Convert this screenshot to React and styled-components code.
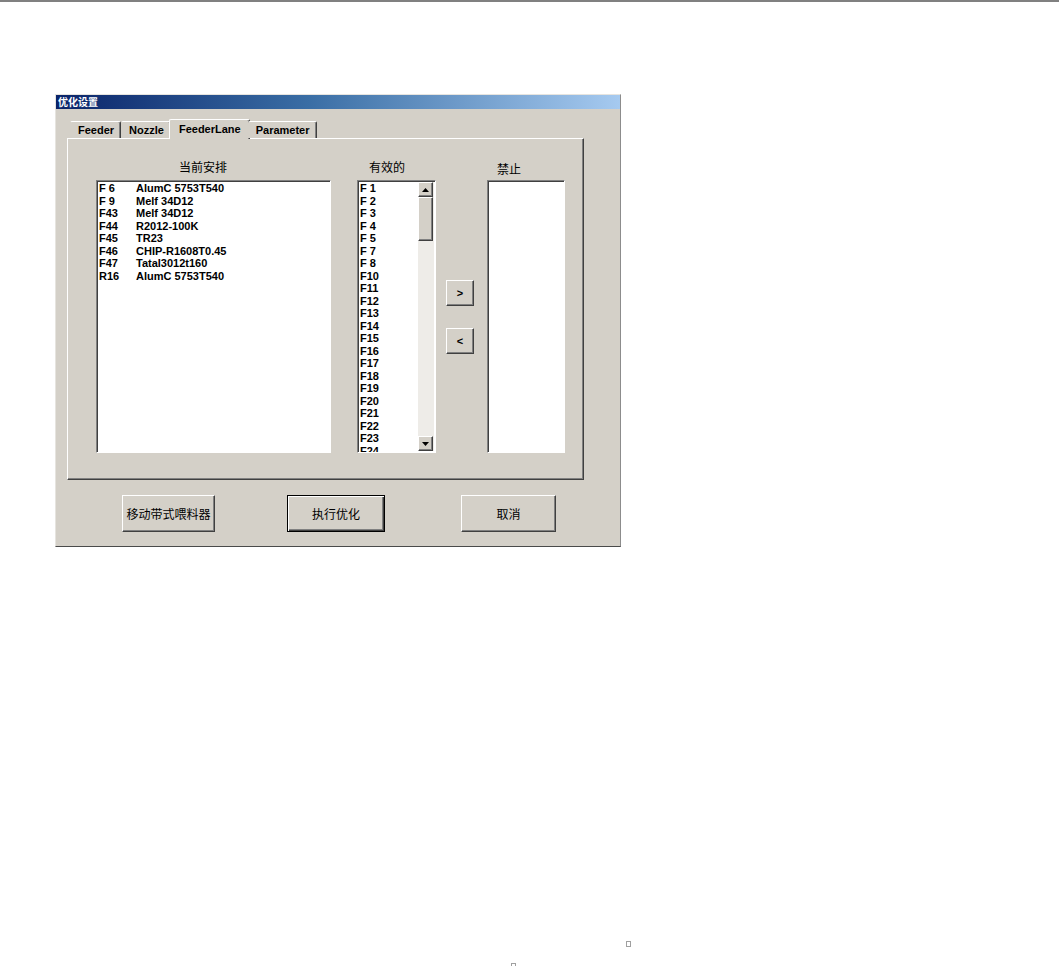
import React from 'react';
import styled, { createGlobalStyle, css } from 'styled-components';

const GlobalStyle = createGlobalStyle`
  html, body { margin: 0; padding: 0; background: #ffffff; }
  body { font-family: "Liberation Sans", Arial, "Noto Sans CJK SC", sans-serif; }
  * { box-sizing: border-box; }
`;

const FACE = '#d4d0c8';

const raised = css`
  border: 1px solid;
  border-color: #ffffff #404040 #404040 #ffffff;
  box-shadow: inset -1px -1px 0 #808080;
`;

const sunken = css`
  border: 1px solid;
  border-color: #808080 #ffffff #ffffff #808080;
  box-shadow: inset 1px 1px 0 #404040;
`;

const Page = styled.div`
  position: relative;
  min-height: 966px;
  border-top: 2px solid #808080;
  padding: 92px 0 0 55px;
`;

const Window = styled.div`
  width: 566px;
  height: 453px;
  background: ${FACE};
  border: 1px solid;
  border-color: #e6e4df #8c8c8c #4a4a4a #e6e4df;
  display: flex;
  flex-direction: column;
`;

const TitleBar = styled.div`
  height: 14px;
  background: linear-gradient(to right, #0a246a 0%, #3a6ea5 45%, #a6caf0 100%);
  color: #ffffff;
  font: bold 10px/14px "Noto Sans CJK SC", sans-serif;
  padding-left: 2px;
`;

const Body = styled.div`
  padding: 10px 0 0 11px;
  display: flex;
  flex-direction: column;
`;

const TabStrip = styled.div`
  display: flex;
  align-items: flex-end;
  height: 19px;
  padding-left: 3px;
  position: relative;
  z-index: 1;
`;

const Tab = styled.div`
  height: ${(p) => (p.$active ? 20 : 17)}px;
  margin: ${(p) => (p.$active ? '0 -2px -1px -2px' : '0')};
  padding: ${(p) => (p.$active ? '2px 8px 0 9px' : '1px 6px 0 7px')};
  background: ${FACE};
  font: bold 11px/14px "Liberation Sans", Arial, sans-serif;
  color: #000;
  border-top: 1px solid #ffffff;
  border-left: 1px solid ${(p) => (p.$active ? '#ffffff' : 'transparent')};
  border-right: 1px solid #404040;
  box-shadow: inset -1px 0 0 #808080;
  border-radius: 2px 2px 0 0;
  white-space: nowrap;
`;

const Panel = styled.div`
  width: 517px;
  height: 342px;
  border: 1px solid;
  border-color: #ffffff #404040 #404040 #ffffff;
  box-shadow: inset -1px -1px 0 #808080;
  padding: 0 0 0 28px;
  display: flex;
`;

const Column = styled.div`
  display: flex;
  flex-direction: column;
  margin-left: ${(p) => p.$gap || 0}px;
`;

const Label = styled.div`
  height: 41px;
  padding: ${(p) => 20 + (p.$drop || 0)}px 0 0 ${(p) => p.$indent}px;
  font: 12px/16px "Noto Sans CJK SC", sans-serif;
  color: #000;
  white-space: nowrap;
`;

const ListBox = styled.div`
  ${sunken};
  width: ${(p) => p.$w}px;
  height: 273px;
  background: #ffffff;
  display: flex;
  overflow: hidden;
`;

const ListItems = styled.div`
  flex: 1;
  padding: 1px 0 0 2px;
  font: bold 11px/12.5px "Liberation Sans", Arial, sans-serif;
  color: #000;
  overflow: hidden;
`;

const Row = styled.div`
  display: flex;
  white-space: nowrap;
  height: 12.5px;
`;

const Code = styled.span`
  width: 37px;
  flex: none;
`;

const ScrollBar = styled.div`
  width: 16px;
  margin: 1px 1px 1px 0;
  display: flex;
  flex-direction: column;
  background: #eeece8;
`;

const ScrollButton = styled.div`
  ${raised};
  width: 15px;
  height: 15px;
  background: ${FACE};
  display: flex;
  align-items: center;
  justify-content: center;
`;

const Thumb = styled.div`
  ${raised};
  height: 44px;
  width: 15px;
  background: ${FACE};
`;

const Track = styled.div`
  flex: 1;
`;

const MoveColumn = styled.div`
  display: flex;
  flex-direction: column;
  gap: 22px;
  padding-top: 141px;
  margin-left: 10px;
`;

const SmallButton = styled.button`
  ${raised};
  width: 28px;
  height: 26px;
  padding: 0;
  background: ${FACE};
  font: bold 11px "Liberation Sans", Arial, sans-serif;
  color: #000;
`;

const Footer = styled.div`
  display: flex;
  padding: 15px 0 0 ${(p) => p.$start}px;
`;

const PushButton = styled.button`
  ${raised};
  width: ${(p) => p.$w}px;
  height: 37px;
  margin-left: ${(p) => p.$gap || 0}px;
  padding: 0;
  background: ${FACE};
  font: 12px "Noto Sans CJK SC", sans-serif;
  color: #000;
  white-space: nowrap;
  ${(p) =>
    p.$default &&
    css`
      border: 1px solid #000;
      box-shadow: inset 1px 1px 0 #ffffff, inset -1px -1px 0 #404040, inset -2px -2px 0 #808080;
    `}
`;

const Tofu = styled.span`
  position: absolute;
  left: ${(p) => p.$x}px;
  top: ${(p) => p.$y}px;
  width: 5px;
  height: 6px;
  border: 1px solid #a0a0a0;
`;

const Arrow = ({ up }) => (
  <svg width="7" height="4" viewBox="0 0 7 4">
    <path d={up ? 'M3.5 0 L7 4 L0 4 Z' : 'M0 0 L7 0 L3.5 4 Z'} fill="#000" />
  </svg>
);

const arranged = [
  ['F 6', 'AlumC 5753T540'],
  ['F 9', 'Melf 34D12'],
  ['F43', 'Melf 34D12'],
  ['F44', 'R2012-100K'],
  ['F45', 'TR23'],
  ['F46', 'CHIP-R1608T0.45'],
  ['F47', 'Tatal3012t160'],
  ['R16', 'AlumC 5753T540'],
];

const available = [
  'F 1', 'F 2', 'F 3', 'F 4', 'F 5', 'F 7', 'F 8', 'F10', 'F11', 'F12', 'F13',
  'F14', 'F15', 'F16', 'F17', 'F18', 'F19', 'F20', 'F21', 'F22', 'F23', 'F24',
];

export default function App() {
  return (
    <>
      <GlobalStyle />
      <Page>
        <Window>
          <TitleBar>优化设置</TitleBar>
          <Body>
            <TabStrip>
              <Tab>Feeder</Tab>
              <Tab>Nozzle</Tab>
              <Tab $active>FeederLane</Tab>
              <Tab>Parameter</Tab>
            </TabStrip>
            <Panel>
              <Column>
                <Label $indent={83}>当前安排</Label>
                <ListBox $w={235}>
                  <ListItems>
                    {arranged.map(([code, name]) => (
                      <Row key={code}>
                        <Code>{code}</Code>
                        <span>{name}</span>
                      </Row>
                    ))}
                  </ListItems>
                </ListBox>
              </Column>
              <Column $gap={26}>
                <Label $indent={12}>有效的</Label>
                <ListBox $w={79}>
                  <ListItems>
                    {available.map((code) => (
                      <Row key={code}>{code}</Row>
                    ))}
                  </ListItems>
                  <ScrollBar>
                    <ScrollButton>
                      <Arrow up />
                    </ScrollButton>
                    <Thumb />
                    <Track />
                    <ScrollButton>
                      <Arrow />
                    </ScrollButton>
                  </ScrollBar>
                </ListBox>
              </Column>
              <MoveColumn>
                <SmallButton>&gt;</SmallButton>
                <SmallButton>&lt;</SmallButton>
              </MoveColumn>
              <Column $gap={13}>
                <Label $indent={10} $drop={2}>禁止</Label>
                <ListBox $w={78} />
              </Column>
            </Panel>
            <Footer $start={55}>
              <PushButton $w={93}>移动带式喂料器</PushButton>
              <PushButton $w={98} $gap={72} $default>执行优化</PushButton>
              <PushButton $w={95} $gap={76}>取消</PushButton>
            </Footer>
          </Body>
        </Window>
        <Tofu $x={626} $y={939} />
        <Tofu $x={511} $y={961} />
      </Page>
    </>
  );
}
